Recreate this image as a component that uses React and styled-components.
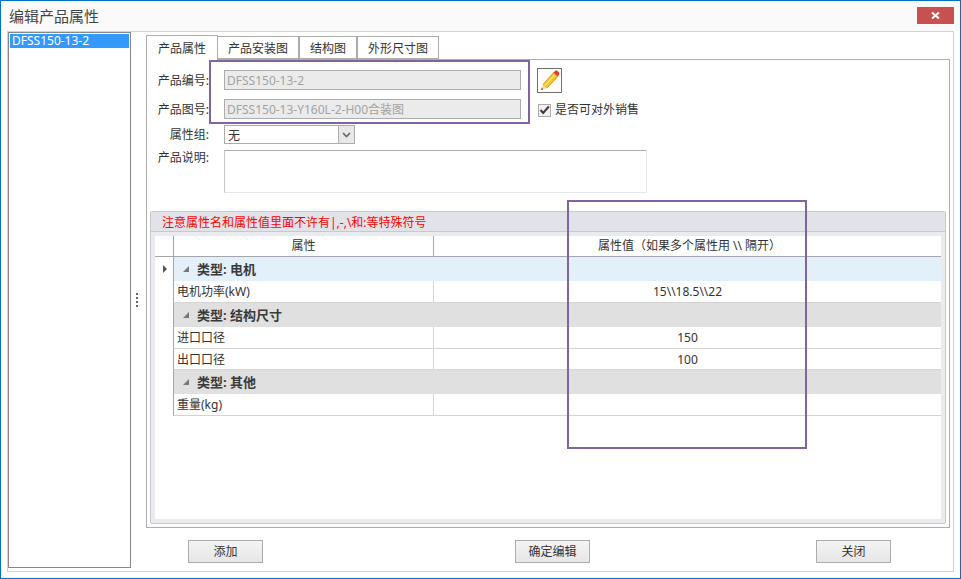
import React from "react";
import styled, { createGlobalStyle } from "styled-components";

const tabs = [
  { label: "产品属性", width: 72, active: true },
  { label: "产品安装图", width: 81 },
  { label: "结构图", width: 58 },
  { label: "外形尺寸图", width: 82 },
];

const rows = [
  { type: "group", label: "类型: 电机", current: true },
  { type: "row", name: "电机功率(kW)", value: "15\\\\18.5\\\\22" },
  { type: "group", label: "类型: 结构尺寸" },
  { type: "row", name: "进口口径", value: "150" },
  { type: "row", name: "出口口径", value: "100", short: true },
  { type: "group", label: "类型: 其他" },
  { type: "row", name: "重量(kg)", value: "" },
];

const App = () => {
  return (
    <Window>
      <GlobalStyle />
      <TitleBar>
        <Title>编辑产品属性</Title>
        <CloseButton>
          <svg width="9" height="7" viewBox="0 0 9 7">
            <path d="M1 0.5 L8 6.5 M8 0.5 L1 6.5" stroke="#fff" strokeWidth="2" />
          </svg>
        </CloseButton>
      </TitleBar>

      <Panel>
        <ProductList>
          <ProductItem>DFSS150-13-2</ProductItem>
        </ProductList>

        <Splitter>
          <Dot />
          <Dot />
          <Dot />
          <Dot />
        </Splitter>

        <Main>
          <TabBar>
            {tabs.map((tab) => (
              <Tab key={tab.label} $width={tab.width} $active={tab.active}>
                {tab.label}
              </Tab>
            ))}
          </TabBar>

          <TabPage>
            <Form>
              <FormRow>
                <Label $low>产品编号:</Label>
                <TextInput>DFSS150-13-2</TextInput>
                <PencilButton>
                  <svg width="23" height="23" viewBox="0 0 23 23">
                    <path d="M5 15.5 L15.5 3.5 L20 7.5 L9 19 Z" fill="#f6c21c" stroke="#c98a10" strokeWidth="0.7" />
                    <path d="M7 16.5 L17 5.5" stroke="#fde27a" strokeWidth="1.6" />
                    <path d="M15.5 3.5 L17.5 1.5 Q18.5 1 19.5 2 L21 3.6 Q21.7 4.6 21 5.6 L20 7.5 Z" fill="#e2401f" />
                    <path d="M5 15.5 L9 19 L3 21 Z" fill="#f3d3a6" />
                    <path d="M3.8 18.8 L5.2 20.2 L3 21 Z" fill="#4a3a2a" />
                  </svg>
                </PencilButton>
              </FormRow>
              <FormRow>
                <Label $low>产品图号:</Label>
                <TextInput>DFSS150-13-Y160L-2-H00合装图</TextInput>
                <CheckLabel>
                  <CheckBox>
                    <svg width="11" height="10" viewBox="0 0 11 10">
                      <path d="M1.5 5 L4.2 8 L9.8 1.5" fill="none" stroke="#3c3c3c" strokeWidth="2" />
                    </svg>
                  </CheckBox>
                  是否可对外销售
                </CheckLabel>
              </FormRow>
              <FormRow>
                <Label>属性组:</Label>
                <Select>
                  <SelectValue>无</SelectValue>
                  <SelectArrow>
                    <svg width="9" height="6" viewBox="0 0 9 6">
                      <path d="M1 1 L4.5 4.5 L8 1" fill="none" stroke="#666" strokeWidth="1.6" />
                    </svg>
                  </SelectArrow>
                </Select>
              </FormRow>
              <FormRow $top>
                <Label>产品说明:</Label>
                <TextArea />
              </FormRow>
            </Form>

            <GroupPanel>
              <GroupHeader>注意属性名和属性值里面不许有|,-,\和:等特殊符号</GroupHeader>
              <GroupBody>
                <Grid>
                  <HeadRow>
                    <span />
                    <HeadCell>属性</HeadCell>
                    <HeadCell>属性值（如果多个属性用 \\ 隔开）</HeadCell>
                  </HeadRow>
                  {rows.map((row) =>
                    row.type === "group" ? (
                      <GroupRow key={row.label}>
                        <Indicator>{row.current && <CurrentMark />}</Indicator>
                        <GroupCell $current={row.current}>
                          <Collapse />
                          {row.label}
                        </GroupCell>
                      </GroupRow>
                    ) : (
                      <DataRow key={row.name} $short={row.short}>
                        <Indicator />
                        <NameCell>{row.name}</NameCell>
                        <ValueCell>{row.value}</ValueCell>
                      </DataRow>
                    )
                  )}
                </Grid>
              </GroupBody>
            </GroupPanel>
          </TabPage>

          <Footer>
            <Button>添加</Button>
            <Button>确定编辑</Button>
            <Button>关闭</Button>
          </Footer>
        </Main>
      </Panel>

      <Annotation $left={209} $top={60} $width={321} $height={64} />
      <Annotation $left={567} $top={200} $width={240} $height={249} />
    </Window>
  );
};

const GlobalStyle = createGlobalStyle`
  html, body {
    margin: 0;
    padding: 0;
    background: #fff;
  }
  * {
    box-sizing: border-box;
  }
`;

const Window = styled.div`
  position: relative;
  width: 961px;
  height: 579px;
  display: flex;
  flex-direction: column;
  border: 1px solid #0072c6;
  background: #fff;
  color: #333;
  font-family: "Noto Sans", "Noto Sans CJK SC", sans-serif;
  font-size: 12px;
  line-height: 16px;
  overflow: hidden;
`;

const TitleBar = styled.div`
  height: 30px;
  flex: none;
  display: flex;
  justify-content: space-between;
  padding: 6px 6px 0 8px;
  background: #fafafa;
`;

const Title = styled.div`
  margin-top: -1px;
  font-size: 15px;
  line-height: 20px;
  color: #444;
`;

const CloseButton = styled.div`
  width: 37px;
  height: 17px;
  display: flex;
  align-items: center;
  justify-content: center;
  background: #c75050;
`;

const Panel = styled.div`
  flex: none;
  height: 541px;
  margin: 0 6px;
  display: flex;
  border: 1px solid #d2d2d2;
`;

const ProductList = styled.div`
  width: 123px;
  height: 536px;
  flex: none;
  padding: 1px;
  border: 1px solid #828790;
`;

const ProductItem = styled.div`
  height: 14px;
  padding-left: 2px;
  line-height: 14px;
  background: #3399ff;
  color: #fff;
`;

const Splitter = styled.div`
  width: 12px;
  height: 536px;
  flex: none;
  display: flex;
  flex-direction: column;
  align-items: center;
  justify-content: center;
  gap: 2px;
  margin-right: 3px;
`;

const Dot = styled.i`
  width: 2px;
  height: 2px;
  background: #666;
`;

const Main = styled.div`
  width: 804px;
  flex: none;
  padding-top: 3px;
`;

const TabBar = styled.div`
  height: 24px;
  display: flex;
  align-items: flex-end;
`;

const Tab = styled.div`
  position: relative;
  width: ${({ $width }) => $width}px;
  height: ${({ $active }) => ($active ? 25 : 23)}px;
  margin-bottom: ${({ $active }) => ($active ? -1 : 0)}px;
  padding-top: ${({ $active }) => ($active ? 5 : 4)}px;
  text-align: center;
  background: #fff;
  border: 1px solid #acacac;
  border-bottom: ${({ $active }) => ($active ? "none" : "1px solid #acacac")};
  z-index: ${({ $active }) => ($active ? 1 : 0)};

  &:nth-child(2) {
    border-left: none;
  }
`;

const TabPage = styled.div`
  height: 469px;
  padding: 10px 3px 3px;
  border: 1px solid #acacac;
`;

const Form = styled.div`
  display: flex;
  flex-direction: column;
  gap: 6px;
`;

const FormRow = styled.div`
  display: flex;
  align-items: ${({ $top }) => ($top ? "flex-start" : "center")};

  &:nth-child(1) {
    margin-bottom: 3px;
  }
`;

const Label = styled.div`
  width: 59px;
  margin-right: 15px;
  padding-top: ${({ $low }) => ($low ? 2 : 0)}px;
  flex: none;
  text-align: right;
  white-space: nowrap;
`;

const TextInput = styled.div`
  width: 297px;
  height: 20px;
  padding-left: 2px;
  line-height: 19px;
  color: #a3a3a3;
  background: #ebebeb;
  border: 1px solid #acacac;
`;

const PencilButton = styled.div`
  width: 25px;
  height: 25px;
  margin: -2px 0 -3px 16px;
  flex: none;
  border: 1px solid #707070;
  background: #fff;
`;

const CheckLabel = styled.div`
  display: flex;
  align-items: center;
  gap: 4px;
  height: 20px;
  padding-top: 2px;
  margin-left: 17px;
`;

const CheckBox = styled.div`
  width: 13px;
  height: 13px;
  display: flex;
  align-items: center;
  justify-content: center;
  background: #f0f0f0;
  border: 1px solid #acacac;
`;

const Select = styled.div`
  width: 131px;
  height: 19px;
  display: flex;
  border: 1px solid #acacac;
`;

const SelectValue = styled.div`
  flex: 1;
  padding-left: 3px;
  line-height: 19px;
`;

const SelectArrow = styled.div`
  width: 16px;
  display: flex;
  align-items: center;
  justify-content: center;
  background: #e8e8e8;
  border-left: 1px solid #acacac;
`;

const TextArea = styled.div`
  width: 423px;
  height: 43px;
  border: 1px solid #e3e9ef;
  border-top-color: #abadb3;
  border-left-color: #c8c8cc;
`;

const GroupPanel = styled.div`
  margin-top: 18px;
  height: 313px;
  display: flex;
  flex-direction: column;
  border: 1px solid #c6c7cd;
  border-radius: 2px;
  background: #eaebef;
`;

const GroupHeader = styled.div`
  height: 20px;
  flex: none;
  padding: 3px 0 0 11px;
  color: #ff0000;
  background: #e2e3e8;
  border-bottom: 1px solid #c8c9ce;
`;

const GroupBody = styled.div`
  flex: 1;
  padding: 4px;
  min-height: 0;
`;

const Grid = styled.div`
  height: 100%;
  background: #fff;
`;

const HeadRow = styled.div`
  height: 21px;
  display: grid;
  grid-template-columns: 18px 260px 1fr;
  border-bottom: 1px solid #a3a6ad;
`;

const HeadCell = styled.div`
  padding-top: 2px;
  text-align: center;
  border-left: 1px solid #a3a6ad;

  &:last-child {
    padding-left: 4px;
  }
`;

const GroupRow = styled.div`
  height: 24px;
  display: grid;
  grid-template-columns: 18px 1fr;
`;

const Indicator = styled.div`
  display: flex;
  align-items: center;
  justify-content: center;
`;

const CurrentMark = styled.i`
  width: 0;
  height: 0;
  margin-left: 1px;
  border-style: solid;
  border-width: 4px 0 4px 4px;
  border-color: transparent transparent transparent #555;
`;

const GroupCell = styled.div`
  display: flex;
  align-items: center;
  font-size: 13px;
  font-weight: 700;
  color: #3a3a3a;
  border-left: 1px solid #a3a6ad;
  background: ${({ $current }) => ($current ? "#e3f0fa" : "#e0e0e0")};
`;

const Collapse = styled.i`
  width: 0;
  height: 0;
  margin: 0 8px 0 9px;
  border-style: solid;
  border-width: 0 0 6px 6px;
  border-color: transparent transparent #777 transparent;
`;

const DataRow = styled.div`
  height: ${({ $short }) => ($short ? 21 : 22)}px;
  display: grid;
  grid-template-columns: 18px 260px 1fr;
`;

const NameCell = styled.div`
  padding: 3px 0 0 3px;
  border-left: 1px solid #a3a6ad;
  border-bottom: 1px solid #d4d4d4;
`;

const ValueCell = styled.div`
  padding-top: 3px;
  text-align: center;
  border-left: 1px solid #d4d4d4;
  border-bottom: 1px solid #d4d4d4;
`;

const Footer = styled.div`
  display: grid;
  grid-template-columns: 327px 301px 75px;
  padding: 12px 0 0 42px;
`;

const Button = styled.div`
  width: 75px;
  height: 23px;
  line-height: 21px;
  text-align: center;
  background: linear-gradient(#f4f4f4, #e6e6e6);
  border: 1px solid #acacac;
`;

// the purple boxes drawn over the screenshot
const Annotation = styled.div`
  position: absolute;
  left: ${({ $left }) => $left - 1}px;
  top: ${({ $top }) => $top - 1}px;
  width: ${({ $width }) => $width}px;
  height: ${({ $height }) => $height}px;
  border: 2px solid #8064a2;
  pointer-events: none;
  z-index: 2;
`;

export default App;
